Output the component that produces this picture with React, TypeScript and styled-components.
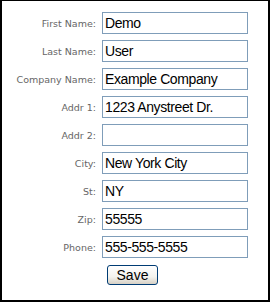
import React from 'react';
import styled, { createGlobalStyle } from 'styled-components';

const GlobalStyle = createGlobalStyle`
  html, body {
    margin: 0;
    padding: 0;
    background: #ffffff;
  }
`;

const Frame = styled.div`
  box-sizing: border-box;
  width: 270px;
  height: 302px;
  border: 2px solid #000000;
  border-top-width: 1px;
  background: #ffffff;
  padding: 11px 0 0 0;
`;

const Form = styled.form`
  display: grid;
  grid-template-columns: 94px 146px;
  grid-auto-rows: 22px;
  column-gap: 6px;
  row-gap: 6px;
  margin: 0;
`;

const Label = styled.label`
  display: flex;
  align-items: center;
  justify-content: flex-end;
  font-family: 'DejaVu Sans', Verdana, sans-serif;
  font-size: 9.5px;
  color: #666666;
  white-space: nowrap;
`;

const Field = styled.input`
  box-sizing: border-box;
  width: 146px;
  height: 22px;
  margin: 0;
  padding: 0 0 0 2px;
  border: 1px solid #7f9db9;
  background: #ffffff;
  font-family: 'Liberation Sans', Arial, sans-serif;
  font-size: 14px;
  letter-spacing: -0.4px;
  color: #000000;
  outline: none;
`;

const ButtonCell = styled.div`
  grid-column: 2;
  padding-left: 5px;
  padding-top: 1px;
`;

const SaveButton = styled.button`
  box-sizing: border-box;
  width: 51px;
  height: 20px;
  padding: 0;
  border: 1px solid #003c74;
  border-radius: 3px;
  background: linear-gradient(#ffffff 0%, #f4f3ee 60%, #d6d0c5 100%);
  font-family: 'Liberation Sans', Arial, sans-serif;
  font-size: 14px;
  color: #000000;
  line-height: 18px;
`;

const fields: [string, string][] = [
  ['First Name:', 'Demo'],
  ['Last Name:', 'User'],
  ['Company Name:', 'Example Company'],
  ['Addr 1:', '1223 Anystreet Dr.'],
  ['Addr 2:', ''],
  ['City:', 'New York City'],
  ['St:', 'NY'],
  ['Zip:', '55555'],
  ['Phone:', '555-555-5555'],
];

export default function App() {
  return (
    <>
      <GlobalStyle />
      <Frame>
        <Form onSubmit={(e) => e.preventDefault()}>
          {fields.map(([label, value]) => (
            <React.Fragment key={label}>
              <Label>{label}</Label>
              <Field defaultValue={value} />
            </React.Fragment>
          ))}
          <ButtonCell>
            <SaveButton type="submit">Save</SaveButton>
          </ButtonCell>
        </Form>
      </Frame>
    </>
  );
}
